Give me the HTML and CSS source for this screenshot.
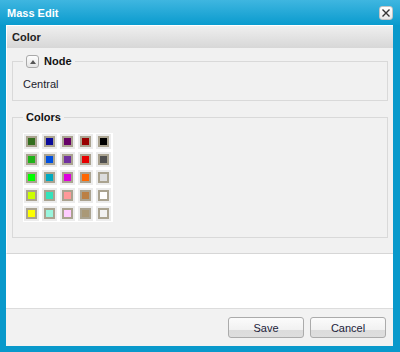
FILE: index.html
```html
<!DOCTYPE html>
<html lang="en">

<head>
    <meta charset="UTF-8">
    <meta name="viewport" content="width=device-width, initial-scale=1.0">
    <title>Mass Edit</title>
    <link rel="stylesheet" href="styles.css">
</head>

<body>
    <div class="janela">
        <div class="janela-titulo">
            <span>Mass Edit</span>
            <button class="btn-fechar" title="Close">
                <svg width="8" height="8" viewBox="0 0 8 8">
                    <path d="M0.5 0.5 L7.5 7.5 M7.5 0.5 L0.5 7.5" stroke="#333" stroke-width="1.4" fill="none" />
                </svg>
            </button>
        </div>

        <div class="janela-conteudo">
            <div class="painel">
                <div class="painel-cabecalho">Color</div>
                <div class="painel-corpo">
                    <fieldset class="grupo">
                        <legend>
                            <span class="btn-toggle"><span class="seta"></span></span>
                            Node
                        </legend>
                        <div class="texto">Central</div>
                    </fieldset>

                    <fieldset class="grupo grupo-cores">
                        <legend>Colors</legend>
                        <div class="paleta" id="paleta"></div>
                    </fieldset>
                </div>
            </div>

            <div class="espaco"></div>

            <div class="rodape">
                <button class="btn">Save</button>
                <button class="btn">Cancel</button>
            </div>
        </div>
    </div>

    <script>
        const cores = [
            '#336e1e', '#0a0a99', '#660066', '#990000', '#000000',
            '#1fb319', '#0050e0', '#7030a0', '#e60000', '#505050',
            '#00ff00', '#00aac0', '#dd00dd', '#ff6600', '#dddddd',
            '#ccff00', '#33e3bb', '#ff9999', '#bb8044', '#ffffff',
            '#ffff00', '#99f5dd', '#ffccff', '#aa9977', '#f2f2f2'
        ];

        const paleta = document.getElementById('paleta');
        cores.forEach(cor => {
            const celula = document.createElement('div');
            celula.className = 'celula';
            const amostra = document.createElement('span');
            amostra.className = 'amostra';
            amostra.style.backgroundColor = cor;
            celula.appendChild(amostra);
            paleta.appendChild(celula);
        });
    </script>
</body>

</html>
```

FILE: styles.css
```css
/* Janela de edição */
* {
    box-sizing: border-box;
    margin: 0;
    padding: 0;
}

body {
    font-family: 'Liberation Sans', Arial, sans-serif;
    font-size: 11px;
    color: #1c1c2e;
    background-color: #fff;
}

.janela {
    width: 400px;
    height: 352px;
    background-color: #0999cb;
    display: flex;
    flex-direction: column;
}

.janela-titulo {
    height: 25px;
    background: linear-gradient(#3fb6e0, #0a9bce);
    display: flex;
    align-items: center;
    justify-content: space-between;
    padding: 1px 7px 0 7px;
    color: #fff;
    font-weight: bold;
}

.btn-fechar {
    width: 14px;
    height: 14px;
    border: 1px solid #c4c4c4;
    border-radius: 3px;
    background: linear-gradient(#ffffff, #e8e8e8);
    display: flex;
    align-items: center;
    justify-content: center;
}

.janela-conteudo {
    flex: 1;
    margin: 0 7px 6px 6px;
    background-color: #fff;
    display: flex;
    flex-direction: column;
}

.painel {
    border-left: 1px solid #fff;
    border-bottom: 1px solid #d6d6d6;
}

.painel-cabecalho {
    height: 23px;
    background: linear-gradient(#efefef, #d7d7d7);
    border-top: 1px solid #fff;
    padding: 0 5px;
    display: flex;
    align-items: center;
    font-weight: bold;
    color: #222;
}

.painel-corpo {
    background-color: #f1f1f1;
    padding: 7px 5px 15px 5px;
}

.grupo {
    border: 1px solid #d9d9d9;
    padding: 10px 10px 9px 10px;
}

.grupo legend {
    padding: 0 3px;
    line-height: 13px;
    font-weight: bold;
    color: #111;
    display: flex;
    align-items: center;
    gap: 5px;
}

.grupo-cores {
    margin-top: 10px;
    padding-top: 9px;
    padding-bottom: 15px;
}

.btn-toggle {
    width: 13px;
    height: 13px;
    border: 1px solid #a9a9a9;
    border-radius: 3px;
    background: linear-gradient(#fdfdfd, #e4e4e4);
    display: flex;
    align-items: center;
    justify-content: center;
}

.seta {
    width: 0;
    height: 0;
    border-left: 3px solid transparent;
    border-right: 3px solid transparent;
    border-bottom: 4px solid #555;
}

.texto {
    line-height: 13px;
}

.paleta {
    display: grid;
    grid-template-columns: repeat(5, 15px);
    gap: 3px;
    padding: 1px 2px 1px 1px;
    background-color: #fff;
    width: max-content;
}

.celula {
    width: 15px;
    height: 15px;
    background-color: #ececec;
    display: flex;
    align-items: center;
    justify-content: center;
}

.amostra {
    width: 11px;
    height: 11px;
    border: 2px solid #aaa390;
}

.espaco {
    flex: 1;
    background-color: #fff;
}

.rodape {
    height: 38px;
    border-top: 1px solid #dcdcdc;
    background-color: #f2f2f2;
    display: flex;
    justify-content: flex-end;
    align-items: center;
    gap: 6px;
    padding: 0 7px 0 0;
}

.btn {
    width: 76px;
    height: 21px;
    border: 1px solid #ababab;
    border-radius: 3px;
    background: linear-gradient(#fbfbfb 0%, #f1f1f1 62%, #dcdcdc 64%, #dedede 100%);
    font-family: 'Liberation Sans', Arial, sans-serif;
    font-size: 11px;
    color: #1c1c3a;
    cursor: pointer;
}
```
